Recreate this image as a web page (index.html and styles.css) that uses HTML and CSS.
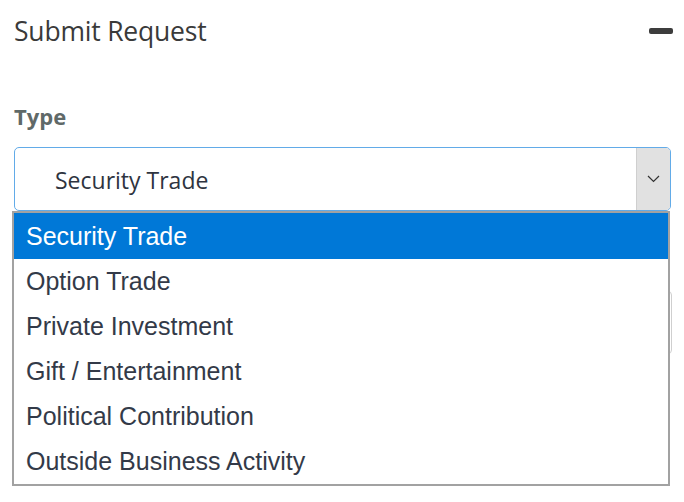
FILE: index.html
```html
<!DOCTYPE html>
<html>
<head>
  <title>Submit Request</title>
  <link rel="stylesheet" href="styles.css">
</head>
<body>
  <div class="panel">
    <div class="panel-header">
      <h2>Submit Request</h2>
      <button class="collapse" aria-label="Collapse"></button>
    </div>

    <div class="field">
      <label class="field-label">Type</label>
      <div class="select-wrap">
        <div class="select-box">
          <span class="select-value">Security Trade</span>
          <span class="select-arrow">
            <svg width="13" height="8" viewBox="0 0 13 8">
              <polyline points="1,1 6.5,6.5 12,1" fill="none" stroke="#333" stroke-width="1.2"/>
            </svg>
          </span>
        </div>
        <ul class="options">
          <li class="selected">Security Trade</li>
          <li>Option Trade</li>
          <li>Private Investment</li>
          <li>Gift / Entertainment</li>
          <li>Political Contribution</li>
          <li>Outside Business Activity</li>
        </ul>
      </div>
    </div>

    <div class="field next-field">
      <input type="text" class="text-input">
    </div>
  </div>
</body>
</html>
```

FILE: styles.css
```css
html, body {
  height: 100%;
}

body {
  margin: 0;
  background: #fff;
  font-family: 'Open Sans', 'Noto Sans', sans-serif;
  color: #333;
}

.panel {
  min-height: 100%;
  box-sizing: border-box;
  padding: 14px 13px 0 14px;
}

.panel-header {
  display: flex;
  justify-content: space-between;
  align-items: center;
  height: 34px;
}

.panel-header h2 {
  margin: 0;
  font-size: 26.5px;
  font-weight: 400;
  line-height: 34px;
  color: #3a3a3a;
  letter-spacing: -0.2px;
}

.collapse {
  width: 24px;
  height: 6px;
  padding: 0;
  margin-right: -2px;
  border: none;
  border-radius: 2px;
  background: #3d3d3d;
  cursor: pointer;
}

.field {
  margin-top: 56px;
}

.field-label {
  display: block;
  font-size: 22px;
  font-weight: 700;
  line-height: 24px;
  color: #5f6968;
  margin-bottom: 19px;
}

.select-wrap {
  position: relative;
}

.select-box {
  display: flex;
  height: 64px;
  box-sizing: border-box;
  border: 1px solid #62abe8;
  border-radius: 5px;
  overflow: hidden;
  background: #fff;
}

.select-value {
  flex: 1;
  padding: 2px 0 0 40px;
  display: flex;
  align-items: center;
  font-size: 23px;
  color: #2e3440;
}

.select-arrow {
  width: 33px;
  display: flex;
  align-items: center;
  justify-content: center;
  background: #e1e1e1;
  border-left: 1px solid #cfcfcf;
}

/* open dropdown list, sits over the fields below */
.options {
  position: absolute;
  top: 100%;
  left: -2px;
  right: 1px;
  margin: 0;
  padding: 0;
  list-style: none;
  border: 2px solid #a2a2a2;
  background: #fff;
  z-index: 2;
}

.options li {
  height: 45px;
  line-height: 45px;
  padding: 0 12px;
  font-family: 'Liberation Sans', Arial, sans-serif;
  font-size: 25px;
  color: #333a48;
}

.options li.selected {
  background: #0078d7;
  color: #fff;
  height: 46px;
  line-height: 46px;
}

.next-field {
  margin-top: 80px;
}

.text-input {
  display: block;
  width: 100%;
  height: 63px;
  box-sizing: border-box;
  margin: 0 0 0 1px;
  border: 1px solid #cfcfcf;
  border-radius: 4px;
}
```
